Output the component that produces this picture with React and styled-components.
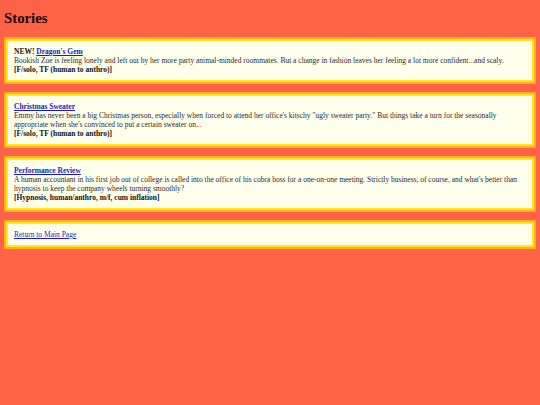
import React from "react";
import styled, { createGlobalStyle } from "styled-components";

const stories = [
  {
    id: 1,
    isNew: true,
    title: "Dragon's Gem",
    blurb:
      "Bookish Zoe is feeling lonely and left out by her more party animal-minded roommates. But a change in fashion leaves her feeling a lot more confident...and scaly.",
    tags: "[F/solo, TF (human to anthro)]",
  },
  {
    id: 2,
    title: "Christmas Sweater",
    blurb:
      "Emmy has never been a big Christmas person, especially when forced to attend her office's kitschy \"ugly sweater party.\" But things take a turn for the seasonally appropriate when she's convinced to put a certain sweater on...",
    tags: "[F/solo, TF (human to anthro)]",
  },
  {
    id: 3,
    title: "Performance Review",
    blurb:
      "A human accountant in his first job out of college is called into the office of his cobra boss for a one-on-one meeting. Strictly business, of course, and what's better than hypnosis to keep the company wheels turning smoothly?",
    tags: "[Hypnosis, human/anthro, m/f, cum inflation]",
  },
];

export default function App() {
  return (
    <>
      <GlobalStyle />
      <Page>
        <Heading>Stories</Heading>
        {stories.map((story) => (
          <Card key={story.id}>
            <div>
              {story.isNew && <New>NEW! </New>}
              <StoryLink href="#" $bold>
                {story.title}
              </StoryLink>
            </div>
            <Blurb>{story.blurb}</Blurb>
            <Tags>{story.tags}</Tags>
          </Card>
        ))}
        <Card>
          <StoryLink href="#">Return to Main Page</StoryLink>
        </Card>
      </Page>
    </>
  );
}

const GlobalStyle = createGlobalStyle`
  html, body {
    margin: 0;
    background: #ff6347;
  }
  body {
    font-family: "Liberation Serif", "Times New Roman", serif;
    font-size: 7.5px;
    color: #222;
  }
`;

const Page = styled.div`
  padding: 4px;
  display: flex;
  flex-direction: column;
  gap: 8px;
`;

const Heading = styled.h1`
  margin: 5px 0 2px;
  font-size: 14.8px;
  line-height: 18px;
  font-weight: bold;
  color: #1a0a08;
`;

const Card = styled.div`
  background: #ffffee;
  border: 2px solid #ffb020;
  box-shadow: inset 0 0 0 2px #ffe81a;
  padding: 8px 10px 8px 8px;
  line-height: 9px;
`;

const New = styled.b`
  color: #111;
`;

const StoryLink = styled.a`
  color: #1a1acc;
  text-decoration: underline;
  font-weight: ${(p) => (p.$bold ? "bold" : "normal")};
`;

const Blurb = styled.div`
  color: #2a2a2a;
`;

const Tags = styled.div`
  font-weight: bold;
  color: #111;
`;
